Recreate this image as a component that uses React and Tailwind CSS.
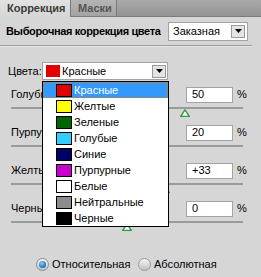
import React from 'react';

const colors = [
  { name: 'Красные', fill: '#e00000' },
  { name: 'Желтые', fill: '#ffff00' },
  { name: 'Зеленые', fill: '#006400' },
  { name: 'Голубые', fill: '#33ccff' },
  { name: 'Синие', fill: '#000066' },
  { name: 'Пурпурные', fill: '#cc00cc' },
  { name: 'Белые', fill: '#ffffff' },
  { name: 'Нейтральные', fill: '#8c8c8c' },
  { name: 'Черные', fill: '#000000' },
];

const sliders = [
  { label: 'Голубые', value: '50', pos: 50 },
  { label: 'Пурпурные', value: '20', pos: 20 },
  { label: 'Желтые', value: '+33', pos: 33 },
  { label: 'Черные', value: '0', pos: 0 },
];

function Arrow() {
  return (
    <div className="w-[14px] h-[13px] border border-[#9a9a9a] bg-[#e4e4e4] flex items-center justify-center">
      <svg width="7" height="4" viewBox="0 0 7 4">
        <path d="M0 0h7L3.5 4z" fill="#000" />
      </svg>
    </div>
  );
}

function Thumb() {
  return (
    <svg width="10" height="8" viewBox="0 0 10 8">
      <path d="M5 0.8L9.2 7.3H0.8z" fill="#fff" stroke="#2e9a3e" strokeWidth="1.3" />
    </svg>
  );
}

export default function App() {
  return (
    <div className="w-[261px] h-[277px] bg-[#d6d6d6] relative overflow-hidden font-['Liberation_Sans',Arial,sans-serif] text-[11px] text-black">
      {/* tabs */}
      <div className="h-[17px] flex bg-gradient-to-b from-[#a9a9a9] to-[#949494] border-b border-[#7c7c7c]">
        <div className="w-[70px] h-[17px] bg-gradient-to-b from-[#e2e2e2] to-[#d6d6d6] flex items-center pl-[7px] font-bold text-[#3a3a3a] text-[11px]">
          Коррекция
        </div>
        <div className="w-[47px] flex items-center pl-[7px] font-bold text-[#555] bg-gradient-to-b from-[#b4b4b4] to-[#a4a4a4] border-l border-r border-[#7a7a7a]">
          Маски
        </div>
      </div>

      {/* header */}
      <div className="h-[28px] flex items-center justify-between pl-[6px] pr-[13px]">
        <span className="font-bold text-[11px] whitespace-nowrap tracking-[-0.35px]">Выборочная коррекция цвета</span>
        <div className="w-[80px] shrink-0 h-[19px] bg-white border border-[#a3a3a3] flex items-center justify-between pl-[4px] pr-[2px]">
          <span className="text-[11px]">Заказная</span>
          <Arrow />
        </div>
      </div>
      <div className="h-[1px] bg-[#9c9c9c] mr-[9px]" />
      <div className="h-[1px] bg-[#e6e6e6] mr-[9px]" />

      {/* colors select */}
      <div className="flex items-center mt-[15px] pl-[8px] h-[18px]">
        <span className="w-[34px]">Цвета:</span>
        <div className="w-[126px] h-[18px] bg-white border border-[#a3a3a3] flex items-center pl-[3px] pr-[1px]">
          <span className="w-[14px] h-[12px] bg-[#e00000] mr-[2px]" />
          <span className="flex-1">Красные</span>
          <Arrow />
        </div>
      </div>

      {/* sliders */}
      <div className="mt-[7px] flex flex-col gap-[16px]">
        {sliders.map((s) => (
          <div key={s.label}>
            <div className="h-[15px] flex items-center pl-[11px]">
              <span className="flex-1">{s.label}</span>
              <div className="w-[47px] h-[16px] bg-white border border-[#a3a3a3] flex items-center pl-[5px] text-[11px]">
                {s.value}
              </div>
              <span className="w-[28px] pl-[4px] text-[11px]">%</span>
            </div>
            <div className="relative mt-[5px] ml-[11px] w-[232px] h-[2px] bg-[#9a9a9a]">
              <div
                className="absolute top-[2px] -translate-x-1/2"
                style={{ left: `${((s.pos + 100) / 200) * 232}px` }}
              >
                <Thumb />
              </div>
            </div>
          </div>
        ))}
      </div>

      {/* radios */}
      <div className="flex items-center mt-[33px] pl-[36px]">
        <div className="flex items-center w-[102px]">
          <span className="w-[13px] h-[13px] rounded-full border border-[#8d8d8d] bg-gradient-to-b from-[#f4f4f4] to-[#c4c4c4] flex items-center justify-center">
            <span className="w-[7px] h-[7px] rounded-full bg-[radial-gradient(circle_at_40%_35%,#7fd0ff,#1572c0_70%,#0b3f70)]" />
          </span>
          <span className="ml-[3px]">Относительная</span>
        </div>
        <div className="flex items-center">
          <span className="w-[13px] h-[13px] rounded-full border border-[#9a9a9a] bg-gradient-to-b from-[#f6f6f6] to-[#c0c0c0]" />
          <span className="ml-[3px]">Абсолютная</span>
        </div>
      </div>

      {/* open dropdown list */}
      <div className="absolute left-[42px] top-[81px] w-[127px] bg-white border border-black">
        {colors.map((c, i) => (
          <div
            key={c.name}
            className={
              i === 0
                ? 'h-[16px] flex items-center pl-[13px] bg-[#3399ff] text-white outline-1 outline-dotted outline-[#e07a00] -outline-offset-1'
                : 'h-[16px] flex items-center pl-[13px]'
            }
          >
            <span className="w-[16px] h-[13px] border border-black mr-[2px]" style={{ background: c.fill }} />
            <span>{c.name}</span>
          </div>
        ))}
      </div>
    </div>
  );
}
